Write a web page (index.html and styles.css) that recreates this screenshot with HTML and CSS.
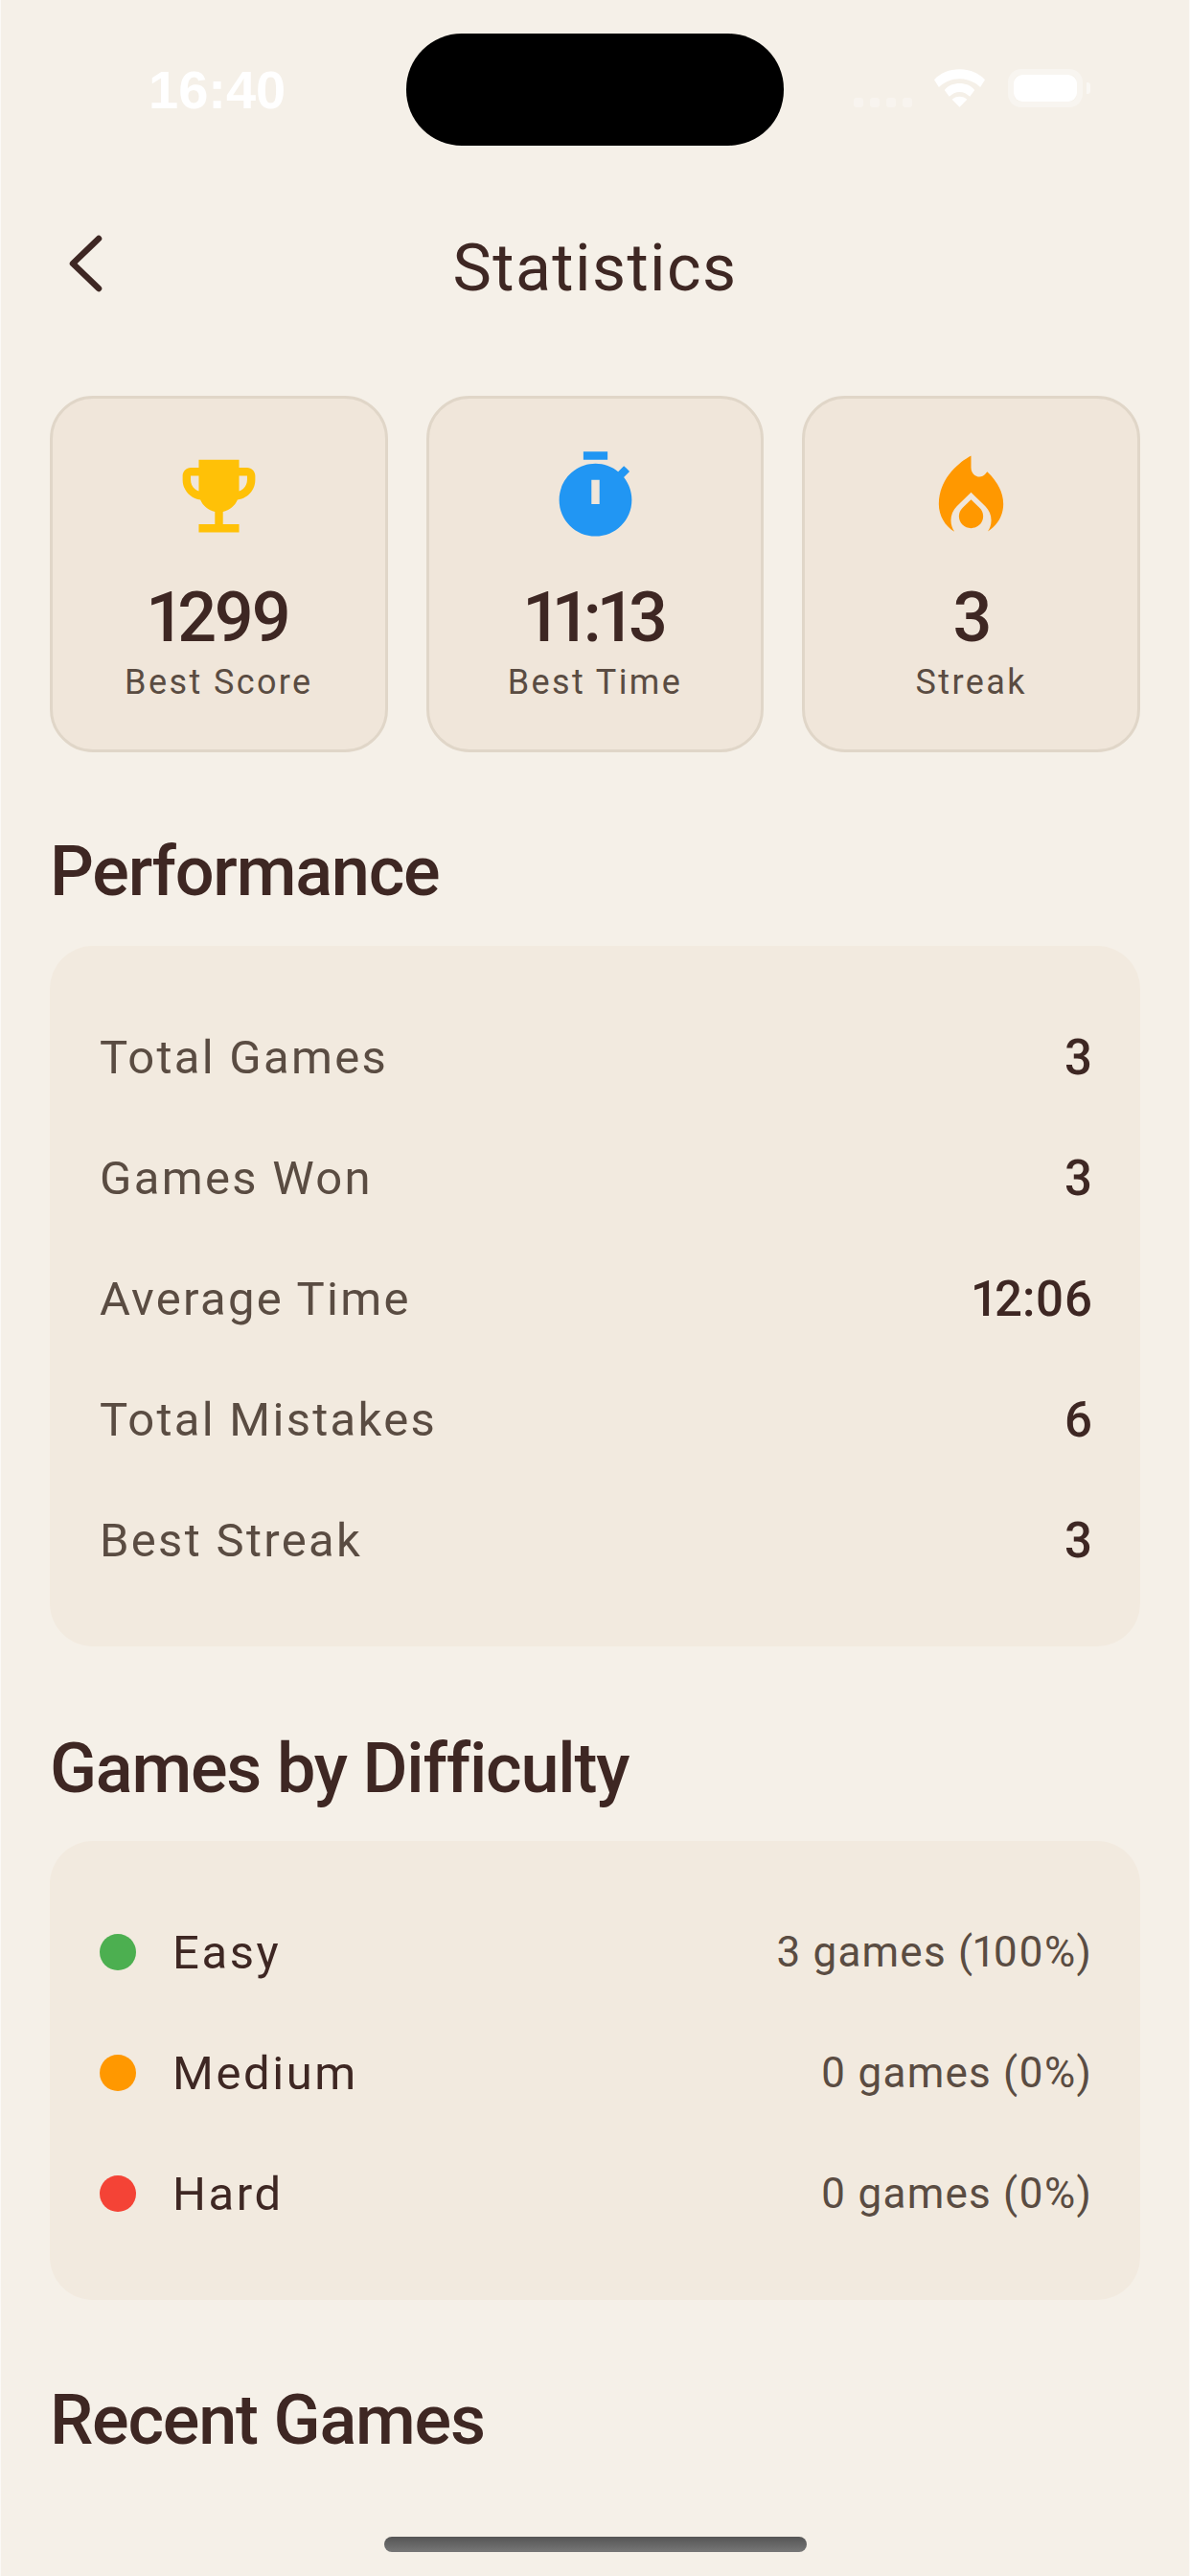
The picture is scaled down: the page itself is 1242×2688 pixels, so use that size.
FILE: index.html
```html
<html>
<head>
<title>Statistics</title>
<link rel="stylesheet" href="styles.css">
</head>
<body>

<div class="phone">

    <div class="status-bar">
        <span class="clock">16:40</span>
        <div class="island"></div>
        <div class="status-icons">
            <div class="signal"><i></i><i></i><i></i><i></i></div>
            <svg class="wifi" viewBox="0 0 54 40"><path d="M27 0C16 0 7 4 0 11l5 8c6-6 14-9 22-9s16 3 22 9l5-8C47 4 38 0 27 0zM27 15c-6 0-12 2-16 7l5 7c3-3 7-5 11-5s8 2 11 5l5-7c-4-5-10-7-16-7zM27 29c-3 0-6 1-8 3l8 8 8-8c-2-2-5-3-8-3z"/></svg>
            <div class="battery"><div class="battery-fill"></div></div>
            <div class="battery-cap"></div>
        </div>
    </div>

    <div class="header">
        <svg class="back" viewBox="0 0 44 60"><path d="M35 4 8 30l27 26"/></svg>
        <h1>Statistics</h1>
    </div>

    <div class="cards">
        <div class="card">
            <svg class="card-icon trophy" viewBox="0 0 24 24"><path d="M19 5h-2V3H7v2H5c-1.1 0-2 .9-2 2v1c0 2.55 1.92 4.63 4.39 4.94.63 1.5 1.98 2.63 3.61 2.96V19H7v2h10v-2h-4v-3.1c1.63-.33 2.98-1.46 3.61-2.96C19.08 12.63 21 10.55 21 8V7c0-1.1-.9-2-2-2zM5 8V7h2v3.82C5.84 10.4 5 9.3 5 8zm14 0c0 1.3-.84 2.4-2 2.82V7h2v1z"/></svg>
            <div class="card-value">1299</div>
            <div class="card-label">Best Score</div>
        </div>
        <div class="card">
            <svg class="card-icon timer" viewBox="0 0 24 24"><path fill-rule="evenodd" d="M15 1H9v2h6V1zm4.03 6.39l1.42-1.42c-.43-.51-.9-.99-1.41-1.41l-1.42 1.42C16.07 4.74 14.12 4 12 4c-4.97 0-9 4.03-9 9s4.02 9 9 9 9-4.03 9-9c0-2.12-.74-4.07-1.97-5.61zM13 14h-2V8h2v6z"/></svg>
            <div class="card-value">11:13</div>
            <div class="card-label">Best Time</div>
        </div>
        <div class="card">
            <svg class="card-icon flame" viewBox="0 0 24 24"><path d="M12 12.9l-2.13 2.09C9.31 15.55 9 16.28 9 17.06 9 18.68 10.35 20 12 20s3-1.32 3-2.94c0-.78-.31-1.52-.87-2.07L12 12.9z"/><path d="M16 6l-.44.55C14.38 8.02 12 7.08 12 5V2S4 6 4 14c0 2.92 1.56 5.47 3.89 6.86-.56-.79-.89-1.76-.89-2.8 0-1.32.52-2.56 1.47-3.5L12 11.1l3.53 3.47c.95.93 1.47 2.17 1.47 3.5 0 1.02-.31 1.96-.85 2.75 1.89-1.15 3.29-3.06 3.71-5.3.66-3.55-1.07-6.9-3.86-9.52z"/></svg>
            <div class="card-value">3</div>
            <div class="card-label">Streak</div>
        </div>
    </div>

    <h2>Performance</h2>
    <div class="panel panel-perf">
        <div class="row"><span class="row-label">Total Games</span><span class="row-value">3</span></div>
        <div class="row"><span class="row-label">Games Won</span><span class="row-value">3</span></div>
        <div class="row"><span class="row-label">Average Time</span><span class="row-value">12:06</span></div>
        <div class="row"><span class="row-label">Total Mistakes</span><span class="row-value">6</span></div>
        <div class="row"><span class="row-label">Best Streak</span><span class="row-value">3</span></div>
    </div>

    <h2>Games by Difficulty</h2>
    <div class="panel panel-diff">
        <div class="row"><span class="dot green"></span><span class="level">Easy</span><span class="count">3 games (100%)</span></div>
        <div class="row"><span class="dot orange"></span><span class="level">Medium</span><span class="count">0 games (0%)</span></div>
        <div class="row"><span class="dot red"></span><span class="level">Hard</span><span class="count">0 games (0%)</span></div>
    </div>

    <h2>Recent Games</h2>

    <div class="home-bar"></div>
</div>

</body>
</html>
```

FILE: styles.css
```css
html, body { margin: 0; padding: 0; }
body { width: 1242px; height: 2688px; overflow: hidden; background: #f5f0e8; font-family: Roboto, sans-serif; font-variant-numeric: proportional-nums; color: #3e2723; }
.phone { position: relative; width: 1242px; height: 2688px; padding: 0 52px; box-sizing: border-box; overflow: hidden; box-shadow: inset 1px 0 #fbf9f6, inset -1px 0 #fbf9f6; }

.status-bar { display: flex; align-items: center; justify-content: space-between; height: 117px; padding-top: 35px; margin: 0 -52px; }
.clock { width: 424px; box-sizing: border-box; padding-left: 155px; font-family: "Liberation Sans", sans-serif; font-weight: bold; font-size: 56px; color: #fff; }
.island { width: 394px; height: 117px; background: #000; border-radius: 58px; }
.status-icons { width: 424px; box-sizing: border-box; padding-left: 73px; margin-top: -3px; display: flex; align-items: center; }
.signal { display: flex; gap: 7px; margin-top: 29px; }
.signal i { display: block; width: 10px; height: 10px; border-radius: 3px; background: #fff; opacity: 0.3; }
.wifi { width: 53px; height: 40px; fill: #fff; margin-left: 23px; }
.battery { width: 78px; height: 40px; margin-left: 24px; border: 6px solid rgba(255,255,255,0.35); border-radius: 14px; box-sizing: border-box; }
.battery-fill { height: 100%; background: #fff; border-radius: 9px; }
.battery-cap { width: 4px; height: 12px; margin-left: 4px; background: rgba(255,255,255,0.5); border-radius: 0 3px 3px 0; }

.header { display: grid; grid-template-columns: 1fr auto 1fr; align-items: center; height: 120px; margin-top: 68px; }
.header h1 { margin: 0; font-size: 68px; font-weight: 400; letter-spacing: 1.4px; }
.back { width: 44px; height: 60px; margin: 0 0 11px 16px; fill: none; stroke: #3e2723; stroke-width: 6.5; stroke-linecap: round; stroke-linejoin: round; }

.cards { display: flex; gap: 40px; margin-top: 73px; }
.card { flex: 1; height: 372px; box-sizing: border-box; padding-top: 51px; text-align: center; background: #f0e6da; border: 3px solid #e0d6c8; border-radius: 45px; }
.card-icon { display: block; width: 101px; height: 101px; margin: 0 auto; }
.trophy { fill: #ffc107; }
.timer { fill: #2196f3; }
.flame { fill: #ff9800; }
.card-value { font-size: 72px; font-weight: 500; line-height: 80px; margin-top: 37px; letter-spacing: -2.5px; }
.card-label { font-size: 36px; line-height: 48px; color: #5a4c42; margin-top: 3px; letter-spacing: 2.4px; }

h2 { margin: 0; font-size: 72px; font-weight: 500; line-height: 80px; letter-spacing: -1.2px; }
.cards + h2 { margin-top: 85px; }
.panel { background: #f2eadf; border-radius: 45px; padding: 76px 50px 71px 52px; display: flex; flex-direction: column; gap: 46px; }
.panel-perf { margin: 37px 0 88px; }
.panel-diff { margin: 35px 0 86px; }
.row { display: flex; align-items: center; height: 80px; }
.row-label { flex: 1; font-size: 49px; color: #5a4c42; letter-spacing: 2.3px; }
.row-value { font-size: 51px; font-weight: 500; }
.dot { width: 38px; height: 38px; border-radius: 50%; margin-right: 38px; }
.green { background: #4caf50; }
.orange { background: #ff9800; }
.red { background: #f44336; }
.level { flex: 1; font-size: 49px; letter-spacing: 2.6px; }
.count { font-size: 44px; color: #5a4c42; letter-spacing: 1.2px; }

.home-bar { position: absolute; left: 401px; top: 2647px; width: 441px; height: 16px; border-radius: 8px; background: linear-gradient(#555, #777); }
```
